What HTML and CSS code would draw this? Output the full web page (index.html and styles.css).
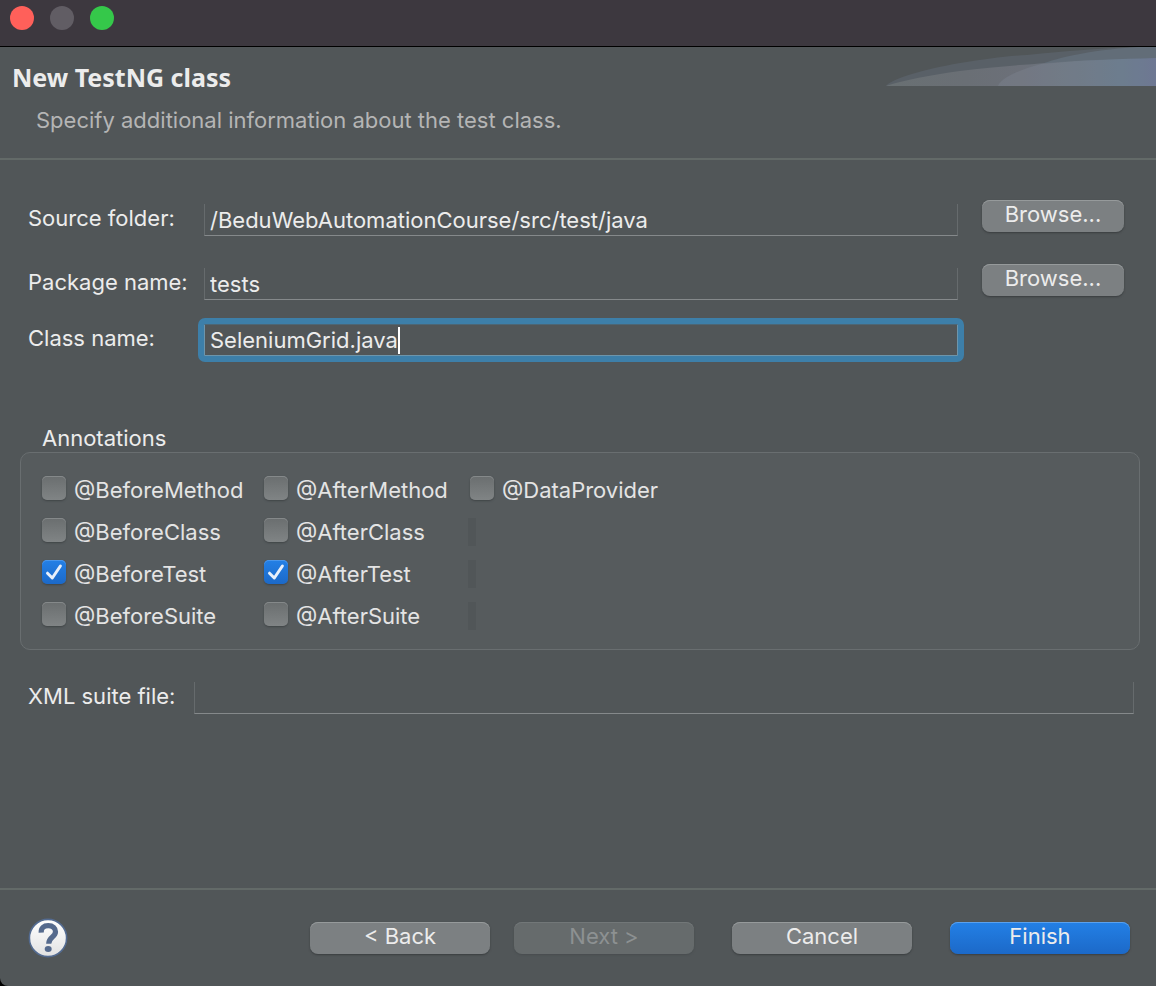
FILE: index.html
```html
<!DOCTYPE html>
<html lang="en">
<head>
<meta charset="utf-8">
<title>New TestNG class</title>
<link rel="stylesheet" href="styles.css">
</head>
<body>
<div class="window">
  <div class="titlebar">
    <button class="light light-close" type="button" aria-label="Close"></button>
    <button class="light light-min" type="button" aria-label="Minimize" disabled></button>
    <button class="light light-zoom" type="button" aria-label="Zoom"></button>
  </div>

  <header class="header">
    <div class="heading">
      <h1 class="title">New TestNG class</h1>
      <p class="subtitle">Specify additional information about the test class.</p>
    </div>
    <svg class="swoosh" width="270" height="39" viewBox="0 0 270 39" aria-hidden="true">
      <defs>
        <linearGradient id="wave" x1="0" x2="1" y1="0" y2="0">
          <stop offset="0" stop-color="#697073"/>
          <stop offset="0.3" stop-color="#6a6f75"/>
          <stop offset="0.5" stop-color="#6c7079"/>
          <stop offset="0.7" stop-color="#6a7580"/>
          <stop offset="0.88" stop-color="#647789"/>
          <stop offset="1" stop-color="#66708f"/>
        </linearGradient>
      </defs>
      <path d="M0 39C5 32 35 23 74 16C100 12 120 9 141 8C180 4 215 1 252 0H270V39Z" fill="#596067"/>
      <path d="M112 39C115 31 132 23 152 18C165 14 175 10 194 7C215 3 235 1 252 0H270V39Z" fill="#626d78"/>
      <path d="M0 39C18 33 45 28 74 24C105 20 135 18 161 16C200 13 235 12 270 11V39Z" fill="url(#wave)"/>
      <path d="M112 39C115 31 132 23 155 17C195 13 235 12 270 11V39Z" fill="#8890a0" fill-opacity="0.25"/>
    </svg>
  </header>

  <main class="content">
    <form class="form" id="wizard">
      <div class="row">
        <label class="label" for="source">Source folder:</label>
        <input class="text" id="source" type="text" value="/BeduWebAutomationCourse/src/test/java">
        <button class="button browse" type="button">Browse...</button>
      </div>
      <div class="row row-package">
        <label class="label" for="package">Package name:</label>
        <input class="text" id="package" type="text" value="tests">
        <button class="button browse" type="button">Browse...</button>
      </div>
      <div class="row row-class">
        <label class="label" for="class">Class name:</label>
        <div class="field">
          <input class="text text-active" id="class" type="text" value="SeleniumGrid.java">
          <span class="caret"></span>
        </div>
      </div>

      <fieldset class="group">
        <legend class="legend">Annotations</legend>
        <div class="checks">
          <label class="check"><input type="checkbox">@BeforeMethod</label>
          <label class="check"><input type="checkbox">@AfterMethod</label>
          <label class="check"><input type="checkbox">@DataProvider</label>
          <label class="check"><input type="checkbox">@BeforeClass</label>
          <label class="check"><input type="checkbox">@AfterClass</label>
          <span class="blank"></span>
          <label class="check"><input type="checkbox" checked><svg class="tick" width="24" height="24" viewBox="0 0 24 24" aria-hidden="true"><path d="M5.500 13.200L10.300 18L18.400 6"/></svg>@BeforeTest</label>
          <label class="check"><input type="checkbox" checked><svg class="tick" width="24" height="24" viewBox="0 0 24 24" aria-hidden="true"><path d="M5.500 13.200L10.300 18L18.400 6"/></svg>@AfterTest</label>
          <span class="blank"></span>
          <label class="check"><input type="checkbox">@BeforeSuite</label>
          <label class="check"><input type="checkbox">@AfterSuite</label>
          <span class="blank"></span>
        </div>
      </fieldset>

      <div class="row row-suite">
        <label class="label" for="suite">XML suite file:</label>
        <input class="text" id="suite" type="text">
      </div>
    </form>
  </main>

  <footer class="footer">
    <button class="help" type="button" aria-label="Help">
      <svg width="40" height="40" viewBox="0 0 40 40" aria-hidden="true">
        <defs>
          <linearGradient id="ball" x1="0" x2="0" y1="0" y2="1">
            <stop offset="0" stop-color="#fff"/>
            <stop offset="1" stop-color="#e2e2e2"/>
          </linearGradient>
        </defs>
        <circle cx="20" cy="20" r="18.600" fill="url(#ball)" stroke="#536b91" stroke-width="1.600"/>
        <path d="M13.200 14.600C13 9.700 15.800 7.700 20.200 7.700C25 7.700 27.500 10.300 27.500 13.800C27.500 19.300 20.700 19 20.700 25.800" fill="none" stroke="#556a8d" stroke-width="5.200"/>
        <ellipse cx="20.200" cy="31" rx="3.500" ry="3" fill="#556a8d"/>
      </svg>
    </button>
    <div class="actions">
      <button class="button" type="button">&lt; Back</button>
      <button class="button next" type="button" disabled>Next &gt;</button>
      <button class="button" type="button">Cancel</button>
      <button class="button finish" type="submit" form="wizard">Finish</button>
    </div>
  </footer>
</div>
</body>
</html>
```

FILE: styles.css
```css
* {
  box-sizing: border-box;
}

body {
  margin: 0;
  background: #000;
  color: #ececec;
  font-family: Inter, "Liberation Sans", sans-serif;
  font-size: 22px;
  line-height: 28px;
}

button,
input {
  font: inherit;
  color: inherit;
}

.window {
  display: flex;
  flex-direction: column;
  min-height: 100vh;
  background: #515658;
  border-bottom-left-radius: 8px;
}

.titlebar {
  display: flex;
  gap: 16px;
  height: 47px;
  padding: 6px 10px;
  background: #3d383f;
  border-bottom: 1px solid #000;
}

.light {
  width: 24px;
  height: 24px;
  padding: 0;
  border: 0;
  border-radius: 50%;
}

.light-close {
  background: #ff605a;
}

.light-min {
  background: #615d64;
}

.light-zoom {
  background: #35c84a;
}

.header {
  display: flex;
  justify-content: space-between;
  align-items: flex-start;
  border-bottom: 2px solid #636a68;
}

.heading {
  padding: 16px 0 24px 12px;
}

.title {
  margin: 0;
  font-family: "Noto Sans", sans-serif;
  font-size: 25px;
  font-weight: 700;
  line-height: 28px;
}

.subtitle {
  margin: 15px 0 0 24px;
  color: #b5b5b5;
}

.content {
  flex: 1;
  padding: 40px 16px 20px 20px;
}

.row {
  display: flex;
  align-items: flex-end;
  height: 36px;
  padding: 0 16px 0 8px;
}

.row-package {
  margin-top: 28px;
}

.row-class {
  margin-top: 20px;
}

.row-suite {
  margin-top: 28px;
  padding-right: 6px;
}

.label {
  flex: none;
  width: 176px;
  align-self: center;
}

.row-suite .label {
  width: 166px;
}

.text {
  flex: 1;
  min-width: 0;
  width: 100%;
  height: 32px;
  padding: 0 5px;
  background: transparent;
  border: 1px solid #666b6d;
  border-top: 0;
  border-bottom-color: #85898b;
  border-radius: 0;
  outline: 0;
}

.field {
  position: relative;
  display: flex;
  flex: 1;
  margin-right: 166px;
}

.text-active {
  border: 1px solid #6d95ab;
  border-top-color: #4c6675;
  outline: 6px solid #3d7fa9;
  border-radius: 1px;
}

.caret {
  position: absolute;
  top: 3px;
  left: 194px;
  width: 2px;
  height: 27px;
  background: #fff;
}

.button {
  width: 180px;
  height: 32px;
  padding: 0 0 4px;
  border: 0;
  border-radius: 8px;
  background: #7c8082;
  box-shadow: inset 0 1px 0 #969a9b, 0 1px 2px #393d3f;
  line-height: 28px;
}

.browse {
  width: 142px;
  margin-left: 24px;
  align-self: flex-start;
}

.next {
  margin-right: 14px;
  background: #666b6c;
  color: #8d9192;
  box-shadow: inset 0 1px 0 #727778, 0 1px 2px #484d4f;
}

.finish {
  margin-left: 14px;
  background: linear-gradient(#2380e6, #1c69c8);
  box-shadow: inset 0 1px 0 #5ba1ed, 0 1px 2px #393d3f;
}

.group {
  margin: 68px 0 0;
  padding: 0;
  border: 0;
}

.legend {
  padding: 0 0 0 22px;
}

.checks {
  display: grid;
  grid-template-columns: 222px 206px auto;
  justify-content: start;
  gap: 14px 0;
  padding: 23px 20px 19px 21px;
  background: #565b5d;
  border: 1px solid #696e70;
  border-radius: 10px;
}

.check {
  position: relative;
  display: flex;
  gap: 8px;
  height: 28px;
  color: #e4e4e4;
}

.check input {
  appearance: none;
  width: 24px;
  height: 24px;
  margin: 0;
  border-radius: 5px;
  background: linear-gradient(#6a6e6f, #808485);
  box-shadow: inset 0 1px 0 #85898a, 0 1px 2px #3f4446;
}

.check input:checked {
  background: linear-gradient(#2380e6, #1c69c8);
  box-shadow: inset 0 1px 0 #4b97eb, 0 1px 2px #3f4446;
}

.tick {
  position: absolute;
  top: 0;
  left: 0;
  fill: none;
  stroke: #e8f0fb;
  stroke-width: 3;
  stroke-linecap: round;
  stroke-linejoin: round;
}

.blank {
  width: 8px;
  margin-left: -2px;
  background: #515658;
}

.footer {
  display: flex;
  justify-content: space-between;
  align-items: center;
  padding: 28px 26px;
  border-top: 2px solid #636a68;
}

.help {
  width: 40px;
  height: 40px;
  margin-left: 2px;
  padding: 0;
  border: 0;
  background: none;
}

.help svg {
  display: block;
}

.actions {
  display: flex;
  gap: 24px;
}
```
